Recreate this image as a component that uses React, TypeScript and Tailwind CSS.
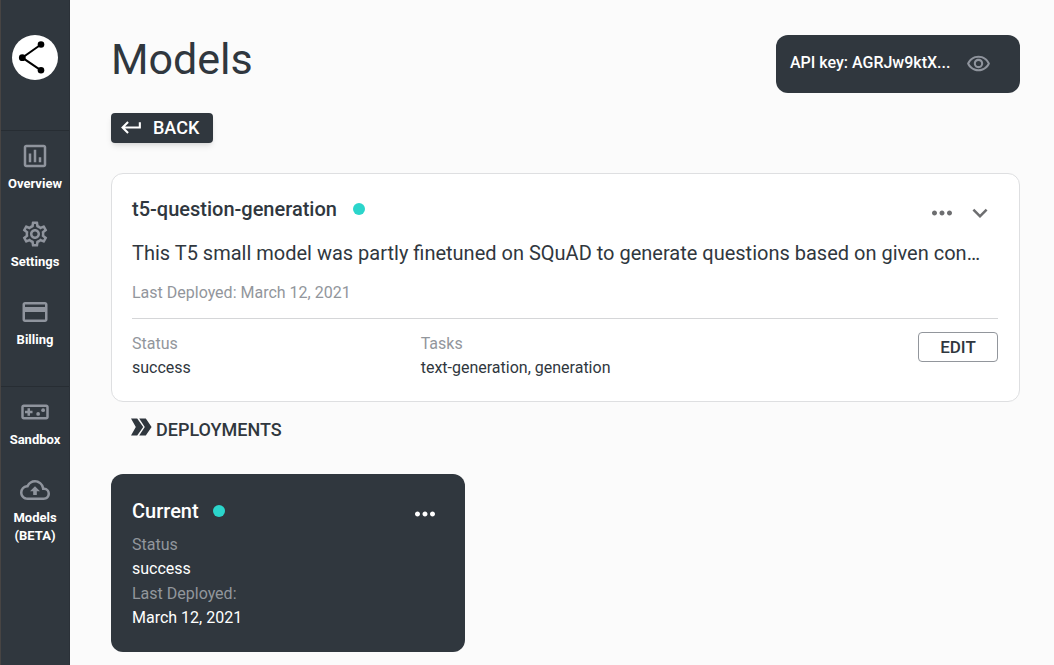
import React from "react";
import {
  MdExpandMore,
  MdKeyboardReturn,
  MdMoreHoriz,
  MdOutlineAssessment,
  MdOutlineBackup,
  MdOutlineCreditCard,
  MdOutlineRemoveRedEye,
  MdOutlineSettings,
  MdOutlineVideogameAsset,
} from "react-icons/md";
import type { IconType } from "react-icons";

function NavItem({ icon: Icon, label }: { icon: IconType; label: React.ReactNode }) {
  return (
    <a href="#" className="flex min-h-[78px] flex-col items-center pt-[10px] text-center text-[13px] leading-[18px] font-bold text-white">
      <Icon size={30} className="mb-1 shrink-0 text-[#8f949d]" />
      {label}
    </a>
  );
}

function Logo() {
  return (
    <svg viewBox="0 0 46 46" className="h-[46px] w-[46px]" role="img" aria-label="Home">
      <ellipse cx="23" cy="22.500" rx="23" ry="22.500" fill="#fff" />
      <path d="M29 9.500 L10.300 22.700 L29 35.300" fill="none" stroke="#000" strokeWidth="2" />
      <circle cx="29" cy="9.500" r="3.300" />
      <circle cx="10.300" cy="22.700" r="3.400" />
      <circle cx="29" cy="35.300" r="3.300" />
    </svg>
  );
}

function Sidebar() {
  return (
    <nav className="flex w-[70px] shrink-0 flex-col border-r border-l border-r-[#2b3138] border-l-[#474443] bg-[#30373e]">
      <a href="#" className="flex h-[130px] justify-center pt-[35px]">
        <Logo />
      </a>
      <div className="h-[256px] border-t border-[#272d33]">
        <NavItem icon={MdOutlineAssessment} label="Overview" />
        <NavItem icon={MdOutlineSettings} label="Settings" />
        <NavItem icon={MdOutlineCreditCard} label="Billing" />
      </div>
      <div className="border-t border-[#272d33]">
        <NavItem icon={MdOutlineVideogameAsset} label="Sandbox" />
        <NavItem
          icon={MdOutlineBackup}
          label={
            <span>
              Models
              <br />
              (BETA)
            </span>
          }
        />
      </div>
    </nav>
  );
}

function Dot() {
  return <span className="h-3 w-3 rounded-full bg-[#2bd5cb]" />;
}

function Field({ label, value }: { label: string; value: string }) {
  return (
    <div>
      <dt className="text-[#92969c]">{label}</dt>
      <dd>{value}</dd>
    </div>
  );
}

function ModelCard() {
  return (
    <section className="mt-[30px] rounded-xl border border-[#dedfe1] bg-white py-[21px] pr-[21px] pl-5">
      <div className="flex h-7 items-center">
        <h2 className="mr-4 text-[20px] leading-7 font-medium">t5-question-generation</h2>
        <Dot />
        <div className="ml-auto flex items-center gap-2 pt-2 pr-[3px] text-[#6d6e70]">
          <button type="button" aria-label="More options">
            <MdMoreHoriz size={30} />
          </button>
          <button type="button" aria-label="Expand">
            <MdExpandMore size={30} />
          </button>
        </div>
      </div>
      <p className="mt-4 text-[20px] leading-7">
        This T5 small model was partly finetuned on SQuAD to generate questions based on given con…
      </p>
      <p className="mt-[14px] pb-[13px] text-[16px] leading-6 text-[#92969c]">Last Deployed: March 12, 2021</p>
      <div className="flex items-start border-t border-[#d5d6d8] pt-[13px]">
        <dl className="-mr-20 grid flex-1 grid-cols-[1fr_2fr] text-[16px] leading-6">
          <Field label="Status" value="success" />
          <Field label="Tasks" value="text-generation, generation" />
        </dl>
        <button type="button" className="h-[30px] w-20 rounded border border-[#92969c] pb-px text-[17px] leading-7 font-medium">
          EDIT
        </button>
      </div>
    </section>
  );
}

function DeploymentCard() {
  return (
    <section className="mt-8 w-[354px] rounded-xl bg-[#30373e] px-[21px] pt-[23px] pb-[22px] text-white">
      <div className="flex h-7 items-center">
        <h3 className="mr-[14px] text-[20px] leading-7 font-medium">Current</h3>
        <Dot />
        <button type="button" aria-label="Deployment options" className="ml-auto pt-[5px] pr-1">
          <MdMoreHoriz size={30} />
        </button>
      </div>
      <dl className="mt-2 flex flex-col gap-px text-[16px] leading-6">
        <Field label="Status" value="success" />
        <Field label="Last Deployed:" value="March 12, 2021" />
      </dl>
    </section>
  );
}

export default function App() {
  return (
    <div className="flex min-h-screen bg-[#fbfbfb] font-['Roboto',sans-serif] text-[#30373e]">
      <Sidebar />
      <main className="min-w-0 flex-1 pt-[35px] pr-[34px] pb-3 pl-[41px]">
        <header className="flex items-start justify-between">
          <h1 className="text-[43px] leading-[48px]">Models</h1>
          <div className="flex h-[58px] w-[244px] items-center gap-[14px] rounded-xl bg-[#30373e] pb-[2px] pl-[14px] text-[16px] font-medium text-white">
            <span className="w-[162px] whitespace-nowrap">API key: AGRJw9ktX...</span>
            <button type="button" aria-label="Show API key" className="text-[#8f949d]">
              <MdOutlineRemoveRedEye size={25} />
            </button>
          </div>
        </header>
        <button
          type="button"
          className="mt-5 flex h-[30px] items-center gap-[9px] rounded bg-[#30373e] pr-[14px] pb-[2px] pl-2 text-[18px] font-medium text-white shadow-md"
        >
          <MdKeyboardReturn size={25} />
          BACK
        </button>
        <ModelCard />
        <h2 className="mt-4 flex h-6 items-center gap-1 pl-5 text-[18px] leading-6 font-medium">
          <svg viewBox="0 0 21 18" className="mb-[6px] h-[18px] w-[21px]" fill="currentColor" aria-hidden="true">
            <path d="M0 0.500h6.200l6 8.500-6 8.500H0l4.800-8.500z" />
            <path d="M8.200 0.500h6.600l5.800 8.500-5.800 8.500H8.200l5.600-8.500z" />
          </svg>
          DEPLOYMENTS
        </h2>
        <DeploymentCard />
      </main>
    </div>
  );
}
